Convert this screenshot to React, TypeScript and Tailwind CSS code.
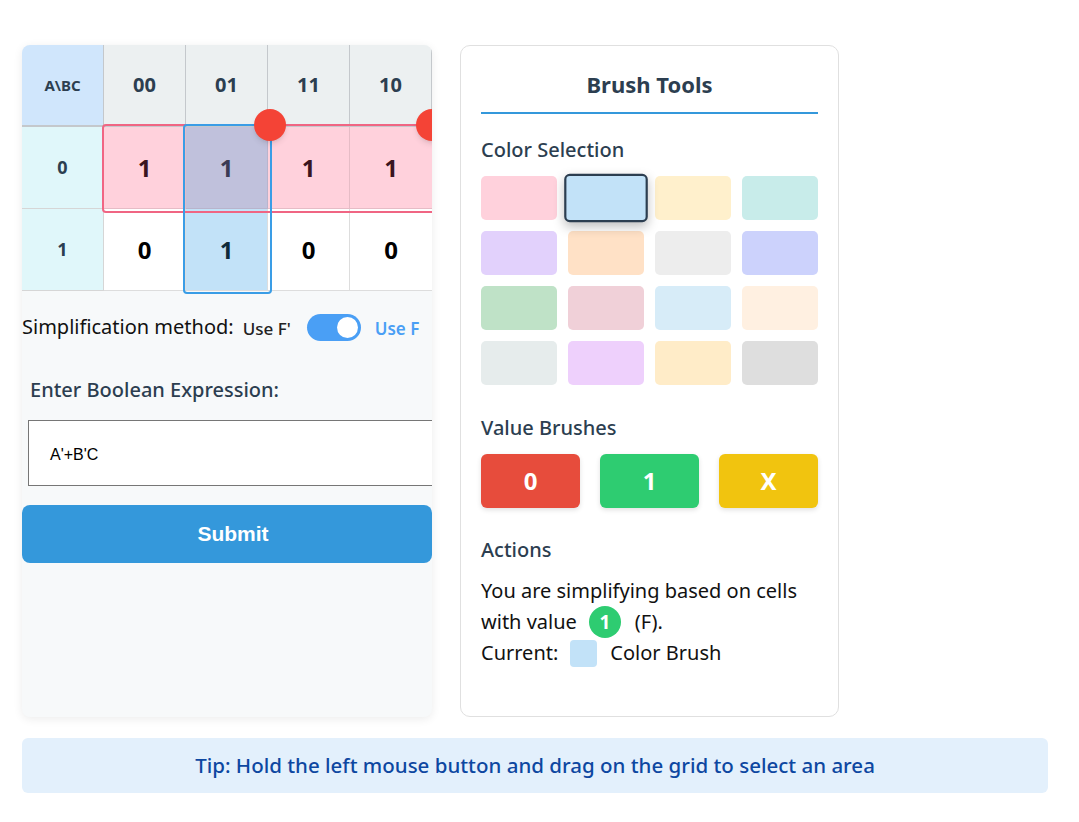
import React from 'react';

const swatches = [
  '#ffd1dc', '#c2e2f8', '#fff0cc', '#c8ecea',
  '#e2d1fc', '#ffe1c6', '#ededed', '#ccd2fc',
  '#bfe2c7', '#f0d0d8', '#d7ecf8', '#fff0e1',
  '#e6ecec', '#eed0fc', '#ffecc8', '#dedede',
];

const font = { fontFamily: '"Noto Sans", "Open Sans", sans-serif' };

const KMap: React.FC = () => {
  const cols = ['00', '01', '11', '10'];
  return (
    <div className="relative">
      <div className="grid grid-cols-[82px_82px_82px_82px_82px] grid-rows-[82px_82px_82px]">
        <div className="flex items-center justify-center bg-[#d0e6fc] border-r border-b-2 border-[#c4c8cc] text-[15px] font-bold text-[#2c3e50]">A\BC</div>
        {cols.map((c) => (
          <div key={c} className="flex items-center justify-center bg-[#ecf0f1] border-r border-b-2 border-[#c4c8cc] text-[20px] font-bold text-[#2c3e50]">{c}</div>
        ))}
        <div className="flex items-center justify-center bg-[#e0f7fa] border-r border-b border-[#d6d6d6] text-[18px] font-bold text-[#2c3e50]">0</div>
        <div className="flex items-center justify-center bg-[#ffd1dc] border-r border-b border-[#e6bcc6] text-[24px] font-bold text-[#3a1520]">1</div>
        <div className="flex items-center justify-center bg-[#c0c1dc] border-r border-b border-[#b8b4cc] text-[24px] font-bold text-[#3a3a55]">1</div>
        <div className="flex items-center justify-center bg-[#ffd1dc] border-r border-b border-[#e6bcc6] text-[24px] font-bold text-[#3a1520]">1</div>
        <div className="flex items-center justify-center bg-[#ffd1dc] border-b border-[#e6bcc6] text-[24px] font-bold text-[#3a1520]">1</div>
        <div className="flex items-center justify-center bg-[#e0f7fa] border-r border-b border-[#d6d6d6] text-[18px] font-bold text-[#2c3e50]">1</div>
        <div className="flex items-center justify-center bg-white border-r border-b border-[#dddddd] text-[24px] font-bold text-black">0</div>
        <div className="flex items-center justify-center bg-[#c2e2f8] border-r border-b border-[#dddddd] text-[24px] font-bold text-[#0d2a3a]">1</div>
        <div className="flex items-center justify-center bg-white border-r border-b border-[#dddddd] text-[24px] font-bold text-black">0</div>
        <div className="flex items-center justify-center bg-white border-b border-[#dddddd] text-[24px] font-bold text-black">0</div>
      </div>
      {/* group outlines */}
      <div className="absolute left-[80px] top-[79px] w-[350px] h-[89px] rounded-[4px] border-2 border-[#f06583]" />
      <div className="absolute left-[161px] top-[79px] w-[89px] h-[170px] rounded-[4px] border-2 border-[#3a9de6]" />
      <div className="absolute left-[232px] top-[64px] w-[32px] h-[32px] rounded-full bg-[#f44336] shadow-md" />
      <div className="absolute left-[394px] top-[64px] w-[32px] h-[32px] rounded-full bg-[#f44336] shadow-md" />
    </div>
  );
};

const App: React.FC = () => {
  return (
    <div className="min-h-screen bg-white" style={font}>
      <div className="w-[1026px] ml-[22px] pt-[45px]">
        <div className="flex gap-[28px] items-stretch">
          {/* left panel */}
          <div className="w-[410px] h-[672px] bg-[#f7f9fa] rounded-[8px] shadow-[0_2px_10px_rgba(0,0,0,0.08)] overflow-hidden">
            <KMap />
            <div className="flex items-center mt-[20px] h-[32px] whitespace-nowrap">
              <span className="text-[20px] text-[#111]">Simplification method:</span>
              <span className="ml-[9px] text-[17px] font-medium text-[#222] mt-[3px]">Use F'</span>
              <div className="ml-[16px] w-[54px] h-[27px] rounded-full bg-[#4a9ff5] flex items-center justify-end pr-[3px] shrink-0">
                <div className="w-[21px] h-[21px] rounded-full bg-white" />
              </div>
              <span className="ml-[14px] text-[17px] font-semibold text-[#4a9ff5] mt-[3px]">Use F</span>
            </div>
            <div className="mt-[32px] pl-[8px] text-[20px] font-medium text-[#2c3e50]">Enter Boolean Expression:</div>
            <div className="mt-[15px] ml-[6px] w-[420px] h-[66px] bg-white border border-[#767676] flex items-center pl-[21px] pt-[3px] text-[16px] text-black" style={{ fontFamily: '"Liberation Sans", Arial, sans-serif' }}>
              A'+B'C
            </div>
            <button className="mt-[19px] w-[410px] h-[58px] bg-[#3498db] rounded-[8px] text-white text-[21px] font-bold pl-[12px]" style={{ fontFamily: '"Liberation Sans", Arial, sans-serif' }}>
              Submit
            </button>
          </div>

          {/* right panel */}
          <div className="w-[379px] h-[672px] bg-white border border-[#e0e0e0] rounded-[10px] px-[20px] pt-[22px]">
            <h2 className="text-center text-[22px] font-bold text-[#2c3e50] leading-[32px]">Brush Tools</h2>
            <div className="mt-[12px] h-[2px] bg-[#3498db]" />
            <h3 className="mt-[22px] text-[20px] font-medium text-[#2c3e50] leading-[28px]">Color Selection</h3>
            <div className="mt-[12px] grid grid-cols-4 gap-x-[11px] gap-y-[11px]">
              {swatches.map((c, i) => (
                <div
                  key={i}
                  className={
                    i === 1
                      ? 'h-[44px] rounded-[5px] border-2 border-[#2c3e50] scale-110 shadow-[0_4px_10px_rgba(0,0,0,0.25)]'
                      : 'h-[44px] rounded-[5px]'
                  }
                  style={{ backgroundColor: c }}
                />
              ))}
            </div>
            <h3 className="mt-[29px] text-[20px] font-medium text-[#2c3e50] leading-[28px]">Value Brushes</h3>
            <div className="mt-[12px] grid grid-cols-3 gap-[20px]">
              <div className="h-[54px] rounded-[6px] bg-[#e74c3c] flex items-center justify-center text-white text-[24px] font-bold shadow-[0_2px_5px_rgba(0,0,0,0.12)]">0</div>
              <div className="h-[54px] rounded-[6px] bg-[#2ecc71] flex items-center justify-center text-white text-[24px] font-bold shadow-[0_2px_5px_rgba(0,0,0,0.12)]">1</div>
              <div className="h-[54px] rounded-[6px] bg-[#f1c40f] flex items-center justify-center text-white text-[24px] font-bold shadow-[0_2px_5px_rgba(0,0,0,0.12)]">X</div>
            </div>
            <h3 className="mt-[28px] text-[20px] font-medium text-[#2c3e50] leading-[28px]">Actions</h3>
            <div className="mt-[12px] text-[20px] text-[#111] leading-[30px]">
              <div>You are simplifying based on cells</div>
              <div className="flex items-center">
                with value
                <span className="ml-[12px] w-[32px] h-[32px] rounded-full bg-[#2ecc71] text-white font-bold text-[19px] flex items-center justify-center">1</span>
                <span className="ml-[14px]">(F).</span>
              </div>
              <div className="flex items-center">
                Current:
                <span className="ml-[12px] w-[27px] h-[27px] rounded-[4px] bg-[#c2e2f8]" />
                <span className="ml-[13px]">Color Brush</span>
              </div>
            </div>
          </div>
        </div>

        <div className="mt-[21px] h-[55px] rounded-[6px] bg-[#e3f0fc] flex items-center justify-center text-[20.5px] font-medium text-[#0d47a1]">
          Tip: Hold the left mouse button and drag on the grid to select an area
        </div>
      </div>
    </div>
  );
};

export default App;
